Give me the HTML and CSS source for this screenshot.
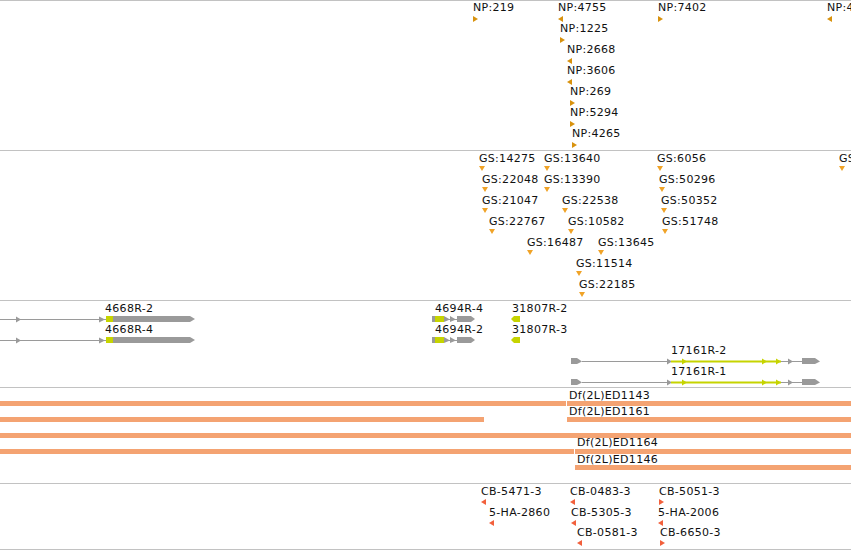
FILE: index.html
```html
<!DOCTYPE html>
<html lang="en">
<head>
<meta charset="utf-8">
<title>Tracks</title>
<link rel="stylesheet" href="styles.css">
</head>
<body>
<div class="browser">
  <section class="track track-np">
    <div class="feat np fwd" style="left:473px;top:0px"><span class="lbl">NP:219</span><i class="mk"></i></div>
    <div class="feat np rev" style="left:558px;top:0px"><span class="lbl">NP:4755</span><i class="mk"></i></div>
    <div class="feat np fwd" style="left:658px;top:0px"><span class="lbl">NP:7402</span><i class="mk"></i></div>
    <div class="feat np rev" style="left:827px;top:0px"><span class="lbl">NP:4410</span><i class="mk"></i></div>
    <div class="feat np fwd" style="left:560px;top:21px"><span class="lbl">NP:1225</span><i class="mk"></i></div>
    <div class="feat np rev" style="left:567px;top:42px"><span class="lbl">NP:2668</span><i class="mk"></i></div>
    <div class="feat np rev" style="left:567px;top:63px"><span class="lbl">NP:3606</span><i class="mk"></i></div>
    <div class="feat np fwd" style="left:570px;top:84px"><span class="lbl">NP:269</span><i class="mk"></i></div>
    <div class="feat np fwd" style="left:570px;top:105px"><span class="lbl">NP:5294</span><i class="mk"></i></div>
    <div class="feat np fwd" style="left:572px;top:126px"><span class="lbl">NP:4265</span><i class="mk"></i></div>
  </section>

  <section class="track track-gs">
    <div class="feat gs" style="left:479px;top:1px"><span class="lbl">GS:14275</span><i class="mk"></i></div>
    <div class="feat gs" style="left:544px;top:1px"><span class="lbl">GS:13640</span><i class="mk"></i></div>
    <div class="feat gs" style="left:657px;top:1px"><span class="lbl">GS:6056</span><i class="mk"></i></div>
    <div class="feat gs" style="left:839px;top:1px"><span class="lbl">GS:7731</span><i class="mk"></i></div>
    <div class="feat gs" style="left:482px;top:22px"><span class="lbl">GS:22048</span><i class="mk"></i></div>
    <div class="feat gs" style="left:544px;top:22px"><span class="lbl">GS:13390</span><i class="mk"></i></div>
    <div class="feat gs" style="left:659px;top:22px"><span class="lbl">GS:50296</span><i class="mk"></i></div>
    <div class="feat gs" style="left:482px;top:43px"><span class="lbl">GS:21047</span><i class="mk"></i></div>
    <div class="feat gs" style="left:562px;top:43px"><span class="lbl">GS:22538</span><i class="mk"></i></div>
    <div class="feat gs" style="left:661px;top:43px"><span class="lbl">GS:50352</span><i class="mk"></i></div>
    <div class="feat gs" style="left:489px;top:64px"><span class="lbl">GS:22767</span><i class="mk"></i></div>
    <div class="feat gs" style="left:568px;top:64px"><span class="lbl">GS:10582</span><i class="mk"></i></div>
    <div class="feat gs" style="left:662px;top:64px"><span class="lbl">GS:51748</span><i class="mk"></i></div>
    <div class="feat gs" style="left:527px;top:85px"><span class="lbl">GS:16487</span><i class="mk"></i></div>
    <div class="feat gs" style="left:598px;top:85px"><span class="lbl">GS:13645</span><i class="mk"></i></div>
    <div class="feat gs" style="left:576px;top:106px"><span class="lbl">GS:11514</span><i class="mk"></i></div>
    <div class="feat gs" style="left:579px;top:127px"><span class="lbl">GS:22185</span><i class="mk"></i></div>
  </section>

  <section class="track track-genes">
    <svg class="glyphs" width="851" height="86" viewBox="0 0 851 86" aria-hidden="true">
      <g class="tx" transform="translate(0,18)">
        <rect class="g" x="0" y="0" width="106" height="1"/>
        <polygon class="g" points="16,-2.5 21,0.5 16,3.5"/>
        <polygon class="g" points="99,-2.5 105,0.5 99,3.5"/>
        <rect class="y" x="106" y="-3" width="7" height="6"/>
        <rect class="g" x="113" y="-3" width="77" height="6"/>
        <polygon class="g" points="190,-3 195,0 190,3"/>
        <rect class="g" x="432" y="-3" width="3" height="6"/>
        <rect class="y" x="435" y="-3" width="9" height="6"/>
        <rect class="g" x="444" y="0" width="14" height="1"/>
        <polygon class="g" points="444,-3 450,0.5 444,3"/>
        <polygon class="g" points="450,-3 456,0.5 450,3"/>
        <rect class="g" x="457" y="-3" width="14" height="6"/>
        <polygon class="g" points="471,-3 475,0 471,3"/>
        <polygon class="y" points="511,0 514,-3 520,-3 520,3 514,3"/>
      </g>
      <g class="tx" transform="translate(0,39)">
        <rect class="g" x="0" y="0" width="106" height="1"/>
        <polygon class="g" points="16,-2.5 21,0.5 16,3.5"/>
        <polygon class="g" points="99,-2.5 105,0.5 99,3.5"/>
        <rect class="y" x="106" y="-3" width="7" height="6"/>
        <rect class="g" x="113" y="-3" width="77" height="6"/>
        <polygon class="g" points="190,-3 195,0 190,3"/>
        <rect class="g" x="432" y="-3" width="3" height="6"/>
        <rect class="y" x="435" y="-3" width="9" height="6"/>
        <rect class="g" x="444" y="0" width="14" height="1"/>
        <polygon class="g" points="444,-3 450,0.5 444,3"/>
        <polygon class="g" points="450,-3 456,0.5 450,3"/>
        <rect class="g" x="457" y="-3" width="14" height="6"/>
        <polygon class="g" points="471,-3 475,0 471,3"/>
        <polygon class="y" points="511,0 514,-3 520,-3 520,3 514,3"/>
      </g>
      <g class="tx" transform="translate(0,60)">
        <rect class="g" x="571" y="-3" width="6" height="6"/>
        <polygon class="g" points="577,-3 582,0.5 577,3"/>
        <rect class="g" x="582" y="0" width="89" height="1"/>
        <polygon class="g" points="667,-2.5 672,0.5 667,3.5"/>
        <rect class="y" x="671" y="-0.5" width="110" height="2"/>
        <polygon class="y" points="682,-2.5 687,0.5 682,3.5"/>
        <polygon class="y" points="762,-2.5 767,0.5 762,3.5"/>
        <polygon class="y" points="776,-2.5 781,0.5 776,3.5"/>
        <rect class="g" x="781" y="0" width="21" height="1"/>
        <polygon class="g" points="788,-2.5 793,0.5 788,3.5"/>
        <rect class="g" x="802" y="-3" width="13" height="6"/>
        <polygon class="g" points="815,-3 820,0.5 815,3"/>
      </g>
      <g class="tx" transform="translate(0,81)">
        <rect class="g" x="571" y="-3" width="6" height="6"/>
        <polygon class="g" points="577,-3 582,0.5 577,3"/>
        <rect class="g" x="582" y="0" width="89" height="1"/>
        <polygon class="g" points="667,-2.5 672,0.5 667,3.5"/>
        <rect class="y" x="671" y="-0.5" width="110" height="2"/>
        <polygon class="y" points="682,-2.5 687,0.5 682,3.5"/>
        <polygon class="y" points="762,-2.5 767,0.5 762,3.5"/>
        <polygon class="y" points="776,-2.5 781,0.5 776,3.5"/>
        <rect class="g" x="781" y="0" width="21" height="1"/>
        <polygon class="g" points="788,-2.5 793,0.5 788,3.5"/>
        <rect class="g" x="802" y="-3" width="13" height="6"/>
        <polygon class="g" points="815,-3 820,0.5 815,3"/>
      </g>
    </svg>
    <div class="feat" style="left:105px;top:1px"><span class="lbl">4668R-2</span></div>
    <div class="feat" style="left:105px;top:22px"><span class="lbl">4668R-4</span></div>
    <div class="feat" style="left:435px;top:1px"><span class="lbl">4694R-4</span></div>
    <div class="feat" style="left:435px;top:22px"><span class="lbl">4694R-2</span></div>
    <div class="feat" style="left:512px;top:1px"><span class="lbl">31807R-2</span></div>
    <div class="feat" style="left:512px;top:22px"><span class="lbl">31807R-3</span></div>
    <div class="feat" style="left:671px;top:43px"><span class="lbl">17161R-2</span></div>
    <div class="feat" style="left:671px;top:64px"><span class="lbl">17161R-1</span></div>
  </section>

  <section class="track track-df">
    <div class="bar" style="left:0;width:566px;top:13px"></div>
    <div class="bar" style="left:567px;width:284px;top:13px"></div>
    <div class="bar" style="left:0;width:484px;top:29px"></div>
    <div class="bar" style="left:567px;width:284px;top:29px"></div>
    <div class="bar" style="left:0;width:851px;top:45px"></div>
    <div class="bar" style="left:0;width:574px;top:61px"></div>
    <div class="bar" style="left:575px;width:276px;top:61px"></div>
    <div class="bar" style="left:575px;width:276px;top:77px"></div>
    <div class="feat" style="left:569px;top:1px"><span class="lbl">Df(2L)ED1143</span></div>
    <div class="feat" style="left:569px;top:17px"><span class="lbl">Df(2L)ED1161</span></div>
    <div class="feat" style="left:577px;top:48px"><span class="lbl">Df(2L)ED1164</span></div>
    <div class="feat" style="left:577px;top:65px"><span class="lbl">Df(2L)ED1146</span></div>
  </section>

  <section class="track track-cb">
    <div class="feat cb rev" style="left:481px;top:1px"><span class="lbl">CB-5471-3</span><i class="mk"></i></div>
    <div class="feat cb rev" style="left:570px;top:1px"><span class="lbl">CB-0483-3</span><i class="mk"></i></div>
    <div class="feat cb fwd" style="left:659px;top:1px"><span class="lbl">CB-5051-3</span><i class="mk"></i></div>
    <div class="feat cb rev" style="left:489px;top:22px"><span class="lbl">5-HA-2860</span><i class="mk"></i></div>
    <div class="feat cb rev" style="left:571px;top:22px"><span class="lbl">CB-5305-3</span><i class="mk"></i></div>
    <div class="feat cb rev" style="left:658px;top:22px"><span class="lbl">5-HA-2006</span><i class="mk"></i></div>
    <div class="feat cb rev" style="left:577px;top:42px"><span class="lbl">CB-0581-3</span><i class="mk"></i></div>
    <div class="feat cb fwd" style="left:660px;top:42px"><span class="lbl">CB-6650-3</span><i class="mk"></i></div>
  </section>
</div>
</body>
</html>
```
FILE: styles.css
```css
html, body {
  margin: 0;
  padding: 0;
  background: #ffffff;
}
body {
  width: 851px;
  height: 550px;
  overflow: hidden;
  font-family: "DejaVu Sans", "Verdana", sans-serif;
  font-size: 11px;
  color: #111111;
}
.browser {
  display: flex;
  flex-direction: column;
  width: 851px;
}
.track {
  position: relative;
  overflow: hidden;
  border-top: 1px solid #c2c2c2;
  flex: none;
}
.track-np { height: 149px; }
.track-gs { height: 149px; }
.track-genes { height: 86px; }
.track-df { height: 95px; }
.track-cb { height: 65px; border-bottom: 1px solid #c2c2c2; }

.feat {
  position: absolute;
  white-space: nowrap;
}
.lbl {
  display: block;
  line-height: 14px;
  letter-spacing: 0.3px;
}
.mk {
  display: block;
  width: 0;
  height: 0;
}
.np .mk { margin-top: 1px; }
.np.fwd .mk {
  border-top: 3px solid transparent;
  border-bottom: 3px solid transparent;
  border-left: 5px solid #d8920e;
}
.np.rev .mk {
  border-top: 3px solid transparent;
  border-bottom: 3px solid transparent;
  border-right: 5px solid #d8920e;
}
.gs .mk {
  border-left: 3px solid transparent;
  border-right: 3px solid transparent;
  border-top: 5px solid #f0a328;
}
.cb.fwd .mk {
  border-top: 3px solid transparent;
  border-bottom: 3px solid transparent;
  border-left: 5px solid #f2603c;
}
.cb.rev .mk {
  border-top: 3px solid transparent;
  border-bottom: 3px solid transparent;
  border-right: 5px solid #f2603c;
}

.glyphs {
  position: absolute;
  left: 0;
  top: 0;
  display: block;
}
.glyphs .g { fill: #9a9a9a; }
.glyphs .y { fill: #c6d400; }

.bar {
  position: absolute;
  height: 5px;
  background: #f4a372;
}
```
